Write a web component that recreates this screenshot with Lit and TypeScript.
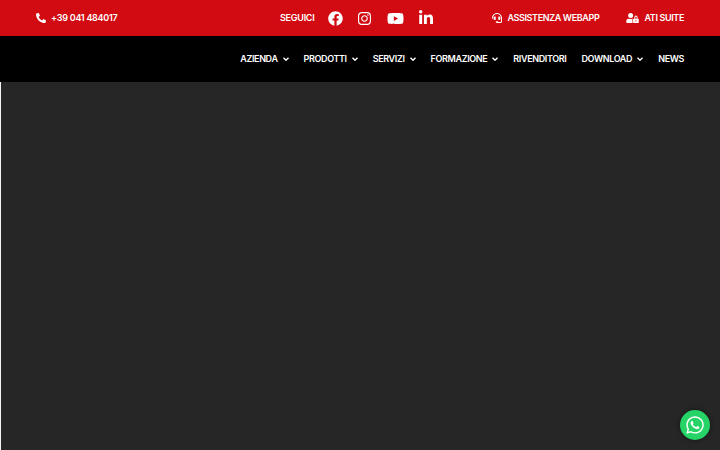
import { LitElement, html, css, svg } from "lit";
import { customElement } from "lit/decorators.js";

const icon = (vb: string, d: string, cls: string) =>
  html`<svg class=${cls} viewBox=${vb} aria-hidden="true">${svg`<path d=${d}></path>`}</svg>`;

const PHONE = "M497.39 361.8l-112-48a24 24 0 0 0-28 6.9l-49.6 60.6A370.66 370.66 0 0 1 130.6 204.11l60.6-49.6a23.94 23.94 0 0 0 6.9-28l-48-112A24.16 24.16 0 0 0 122.6.61l-104 24A24 24 0 0 0 0 48c0 256.5 207.9 464 464 464a24 24 0 0 0 23.4-18.6l24-104a24.29 24.29 0 0 0-14.01-27.6z";
const FB = "M504 256C504 119 393 8 256 8S8 119 8 256c0 123.78 90.69 226.38 209.25 245V327.69h-63V256h63v-54.64c0-62.15 37-96.48 93.67-96.48 27.14 0 55.52 4.84 55.52 4.84v61h-31.28c-30.8 0-40.41 19.12-40.41 38.73V256h68.78l-11 71.69h-57.78V501C413.31 482.38 504 379.78 504 256z";
const IG = "M224.1 141c-63.6 0-114.9 51.3-114.9 114.9s51.3 114.9 114.9 114.9S339 319.5 339 255.9 287.7 141 224.1 141zm0 189.6c-41.1 0-74.7-33.5-74.7-74.7s33.5-74.7 74.7-74.7 74.7 33.5 74.7 74.7-33.6 74.7-74.7 74.7zm146.4-194.3c0 14.9-12 26.8-26.8 26.8-14.9 0-26.8-12-26.8-26.8s12-26.8 26.8-26.8 26.8 12 26.8 26.8zm76.1 27.2c-1.7-35.9-9.9-67.7-36.2-93.9-26.2-26.2-58-34.4-93.9-36.2-37-2.1-147.9-2.1-184.9 0-35.8 1.7-67.6 9.9-93.9 36.1s-34.4 58-36.2 93.9c-2.1 37-2.1 147.9 0 184.9 1.7 35.9 9.9 67.7 36.2 93.9s58 34.4 93.9 36.2c37 2.1 147.9 2.1 184.9 0 35.9-1.7 67.7-9.9 93.9-36.2 26.2-26.2 34.4-58 36.2-93.9 2.1-37 2.1-147.8 0-184.8zM398.8 388c-7.8 19.6-22.9 34.7-42.6 42.6-29.5 11.7-99.5 9-132.1 9s-102.7 2.6-132.1-9c-19.6-7.8-34.7-22.9-42.6-42.6-11.7-29.5-9-99.5-9-132.1s-2.6-102.7 9-132.1c7.8-19.6 22.9-34.7 42.6-42.6 29.5-11.7 99.5-9 132.1-9s102.7-2.6 132.1 9c19.6 7.8 34.7 22.9 42.6 42.6 11.7 29.5 9 99.5 9 132.1s2.7 102.7-9 132.1z";
const YT = "M549.655 124.083c-6.281-23.65-24.787-42.276-48.284-48.597C458.781 64 288 64 288 64S117.22 64 74.629 75.486c-23.497 6.322-42.003 24.947-48.284 48.597-11.412 42.867-11.412 132.305-11.412 132.305s0 89.438 11.412 132.305c6.281 23.65 24.787 41.5 48.284 47.821C117.22 448 288 448 288 448s170.78 0 213.371-11.486c23.497-6.321 42.003-24.171 48.284-47.821 11.412-42.867 11.412-132.305 11.412-132.305s0-89.438-11.412-132.305zm-317.51 213.508V175.185l142.739 81.205-142.739 81.201z";
const LI = "M100.28 448H7.4V148.9h92.88zM53.79 108.1C24.09 108.1 0 83.5 0 53.8a53.79 53.79 0 0 1 107.58 0c0 29.7-24.1 54.3-53.79 54.3zM447.9 448h-92.68V302.4c0-34.7-.7-79.2-48.29-79.2-48.29 0-55.69 37.7-55.69 76.7V448h-92.78V148.9h89.08v40.8h1.3c12.4-23.5 42.69-48.3 87.88-48.3 94 0 111.28 61.9 111.28 142.3V448z";
const HEADSET = "M192 208c0-17.67-14.33-32-32-32h-16c-35.35 0-64 28.65-64 64v48c0 35.35 28.65 64 64 64h16c17.67 0 32-14.33 32-32V208zm176 144c35.35 0 64-28.65 64-64v-48c0-35.35-28.65-64-64-64h-16c-17.67 0-32 14.33-32 32v112c0 17.67 14.33 32 32 32h16zM256 0C113.18 0 4.58 118.83 0 256v16c0 8.84 7.16 16 16 16h16c8.84 0 16-7.16 16-16v-16c0-114.69 93.31-208 208-208s208 93.31 208 208h-.12c.08 2.43.12 165.72.12 165.72 0 23.35-18.93 42.28-42.28 42.28H320c0-26.51-21.49-48-48-48h-32c-26.51 0-48 21.49-48 48s21.49 48 48 48h181.72c49.86 0 90.28-40.42 90.28-90.28V256C507.42 118.83 398.82 0 256 0z";
const USERLOCK = "M224 256A128 128 0 1 0 96 128a128 128 0 0 0 128 128zm96 64a63.08 63.08 0 0 1 8.1-30.5c-4.8-.5-9.5-1.5-14.5-1.5h-16.7a174.08 174.08 0 0 1-145.8 0h-16.7A134.43 134.43 0 0 0 0 422.4V464a48 48 0 0 0 48 48h280.9a63.54 63.54 0 0 1-8.9-32zm288-32h-32v-80a80 80 0 0 0-160 0v80h-32a32 32 0 0 0-32 32v160a32 32 0 0 0 32 32h224a32 32 0 0 0 32-32V320a32 32 0 0 0-32-32zM496 432a32 32 0 1 1 32-32 32 32 0 0 1-32 32zm32-144h-64v-80a32 32 0 0 1 64 0z";
const WA = "M380.9 97.1C339 55.1 283.2 32 223.9 32c-122.4 0-222 99.6-222 222 0 39.1 10.2 77.3 29.6 111L0 480l117.7-30.9c32.4 17.7 68.9 27 106.1 27h.1c122.3 0 224.1-99.6 224.1-222 0-59.3-25.2-115-67.1-157zm-157 341.6c-33.2 0-65.7-8.9-94-25.7l-6.7-4-69.8 18.3L72 359.2l-4.4-7c-18.5-29.4-28.2-63.3-28.2-98.2 0-101.7 82.8-184.5 184.6-184.5 49.3 0 95.6 19.2 130.4 54.1 34.8 34.9 56.2 81.2 56.1 130.5 0 101.8-84.9 184.6-186.6 184.6zm101.2-138.2c-5.5-2.8-32.8-16.2-37.9-18-5.1-1.9-8.8-2.8-12.5 2.8-3.7 5.6-14.3 18-17.6 21.8-3.2 3.7-6.5 4.2-12 1.4-32.6-16.3-54-29.1-75.5-66-5.7-9.8 5.7-9.1 16.3-30.3 1.8-3.7.9-6.9-.5-9.7-1.4-2.8-12.5-30.1-17.1-41.2-4.5-10.8-9.1-9.3-12.5-9.5-3.2-.2-6.9-.2-10.6-.2-3.7 0-9.7 1.4-14.8 6.9-5.1 5.6-19.4 19-19.4 46.3 0 27.3 19.9 53.7 22.6 57.4 2.8 3.7 39.1 59.7 94.8 83.8 35.2 15.2 49 16.5 66.6 13.9 10.7-1.6 32.8-13.4 37.4-26.4 4.6-13 4.6-24.1 3.2-26.4-1.3-2.5-5-3.9-10.5-6.6z";

const NAV: [string, boolean][] = [
  ["AZIENDA", true],
  ["PRODOTTI", true],
  ["SERVIZI", true],
  ["FORMAZIONE", true],
  ["RIVENDITORI", false],
  ["DOWNLOAD", true],
  ["NEWS", false],
];

@customElement("app-root")
export class AppRoot extends LitElement {
  static styles = css`
    :host {
      display: flex;
      flex-direction: column;
      height: 100vh;
      overflow: hidden;
      position: relative;
      font-family: Inter, "Noto Sans", sans-serif;
      color: #fff;
      background: #262626;
    }
    svg { fill: currentColor; display: block; flex: none; }
    span { padding-bottom: 2px; }
    .top {
      flex: none;
      height: 36px;
      background: #d20a11;
      display: flex;
      align-items: center;
      padding: 0 36px;
      font-size: 9px;
      letter-spacing: -0.26px;
      font-weight: 600;
      white-space: nowrap;
    }
    .phone { width: 244px; display: flex; align-items: center; gap: 5px; }
    .phone svg { width: 10px; height: 10px; }
    .social { display: flex; align-items: center; }
    .social .label { width: 48px; }
    .i-fb { width: 15px; height: 15px; }
    .i-ig { width: 13px; height: 15px; margin-left: 15px; }
    .i-yt { width: 17px; height: 15px; margin-left: 16px; }
    .i-li { width: 14px; height: 16px; margin-left: 15px; }
    .links { margin-left: auto; display: flex; align-items: center; gap: 27px; letter-spacing: -0.36px; }
    .link { display: flex; align-items: center; gap: 5px; }
    .i-hs { width: 10px; height: 10px; }
    .i-ul { width: 13px; height: 10px; }
    .nav {
      flex: none;
      height: 46px;
      background: #000;
      display: flex;
      justify-content: flex-end;
      align-items: center;
      gap: 15px;
      padding: 0 36px;
      font-size: 9px;
      letter-spacing: -0.37px;
      font-weight: 600;
      white-space: nowrap;
    }
    .nav-item { display: flex; align-items: center; gap: 5px; }
    .caret { width: 6px; height: 4px; fill: none; stroke: currentColor; stroke-width: 1.4; }
    .main { flex: 1; background: #262626; border-left: 1px solid #f4f4f4; }
    .wa {
      position: absolute;
      right: 10px;
      bottom: 10px;
      width: 30px;
      height: 30px;
      border-radius: 50%;
      background: #25d366;
      box-shadow: 0 0 5px rgba(0, 0, 0, 0.45);
      display: flex;
      align-items: center;
      justify-content: center;
    }
    .wa svg { width: 18px; height: 20px; }
  `;

  render() {
    return html`
      <div class="top">
        <div class="phone">${icon("0 0 512 512", PHONE, "")}<span>+39 041 484017</span></div>
        <div class="social">
          <span class="label">SEGUICI</span>
          ${icon("0 0 512 512", FB, "i-fb")}
          ${icon("0 0 448 512", IG, "i-ig")}
          ${icon("0 0 576 512", YT, "i-yt")}
          ${icon("0 0 448 512", LI, "i-li")}
        </div>
        <div class="links">
          <div class="link">${icon("0 0 512 512", HEADSET, "i-hs")}<span>ASSISTENZA WEBAPP</span></div>
          <div class="link">${icon("0 0 640 512", USERLOCK, "i-ul")}<span>ATI SUITE</span></div>
        </div>
      </div>
      <nav class="nav">
        ${NAV.map(
          ([t, c]) => html`<div class="nav-item">
            <span>${t}</span>
            ${c
              ? html`<svg class="caret" viewBox="0 0 6 4">${svg`<path d="M.5.7 3 3.2 5.5.7"></path>`}</svg>`
              : ""}
          </div>`
        )}
      </nav>
      <div class="main"></div>
      <div class="wa">${icon("0 0 448 512", WA, "")}</div>
    `;
  }
}
